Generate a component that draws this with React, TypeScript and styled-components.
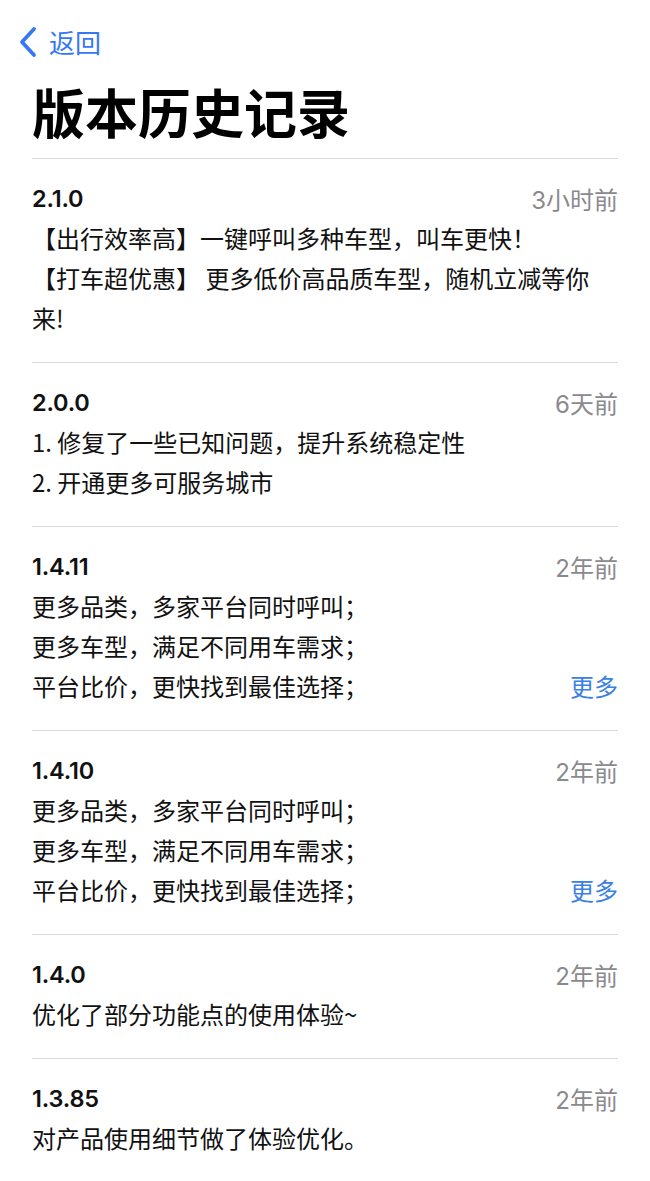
import React from "react";
import styled, { createGlobalStyle } from "styled-components";

const Global = createGlobalStyle`
  html, body { margin: 0; padding: 0; background: #ffffff; }
  body { font-family: "Inter", "Noto Sans CJK SC", sans-serif; color: #111111; }
`;

const Page = styled.div`
  width: 650px;
  display: flex;
  flex-direction: column;
`;

const NavBar = styled.div`
  display: flex;
  align-items: center;
  gap: 10px;
  padding: 27px 0 0 17px;
  height: 30px;
  color: #3478f6;
`;

const BackLabel = styled.span`
  font-family: "Noto Sans CJK SC", sans-serif;
  font-size: 26px;
  line-height: 30px;
  color: #3478f6;
`;

const Title = styled.h1`
  margin: 22px 0 15px 32px;
  font-family: "Noto Sans CJK SC", sans-serif;
  font-size: 53px;
  line-height: 64px;
  font-weight: 700;
  color: #000000;
`;

const List = styled.div`
  margin: 0 32px;
  display: flex;
  flex-direction: column;
`;

const Entry = styled.section`
  border-top: 1px solid #dcdcdc;
  padding: 19px 0 24px;
`;

const HeadRow = styled.div`
  display: flex;
  justify-content: space-between;
  align-items: center;
  height: 40px;
`;

const Version = styled.span`
  font-family: "Inter", "Noto Sans CJK SC", sans-serif;
  font-size: 23.5px;
  font-weight: 600;
  letter-spacing: -0.2px;
  color: #111111;
`;

const Time = styled.span`
  font-family: "Inter", "Noto Sans CJK SC", sans-serif;
  font-size: 24px;
  color: #8a8a8e;
`;

const Line = styled.div`
  display: flex;
  justify-content: space-between;
  align-items: center;
  font-family: "Noto Sans CJK SC", sans-serif;
  font-size: 24px;
  line-height: 40px;
  color: #111111;
`;

const More = styled.span`
  font-family: "Noto Sans CJK SC", sans-serif;
  font-size: 24px;
  color: #3b80e3;
`;

const TextBlock = styled.span`
  flex: 1;
`;

type Item = { v: string; t: string; lines: string[]; more?: boolean };

const items: Item[] = [
  {
    v: "2.1.0",
    t: "3小时前",
    lines: ["【出行效率高】一键呼叫多种车型，叫车更快！", "【打车超优惠】 更多低价高品质车型，随机立减等你来!"],
  },
  { v: "2.0.0", t: "6天前", lines: ["1. 修复了一些已知问题，提升系统稳定性", "2. 开通更多可服务城市"] },
  {
    v: "1.4.11",
    t: "2年前",
    lines: ["更多品类，多家平台同时呼叫；", "更多车型，满足不同用车需求；", "平台比价，更快找到最佳选择；"],
    more: true,
  },
  {
    v: "1.4.10",
    t: "2年前",
    lines: ["更多品类，多家平台同时呼叫；", "更多车型，满足不同用车需求；", "平台比价，更快找到最佳选择；"],
    more: true,
  },
  { v: "1.4.0", t: "2年前", lines: ["优化了部分功能点的使用体验~"] },
  { v: "1.3.85", t: "2年前", lines: ["对产品使用细节做了体验优化。"] },
];

const Chevron = () => (
  <svg width="22" height="32" viewBox="0 0 22 32" fill="none">
    <path d="M17 3 L5 16 L17 29" stroke="#3478f6" strokeWidth="3.8" strokeLinecap="round" strokeLinejoin="round" />
  </svg>
);

export default function App() {
  return (
    <Page>
      <Global />
      <NavBar>
        <Chevron />
        <BackLabel>返回</BackLabel>
      </NavBar>
      <Title>版本历史记录</Title>
      <List>
        {items.map((it) => (
          <Entry key={it.v}>
            <HeadRow>
              <Version>{it.v}</Version>
              <Time>{it.t}</Time>
            </HeadRow>
            {it.lines.map((l, i) => (
              <Line key={i}>
                <TextBlock>{l}</TextBlock>
                {it.more && i === it.lines.length - 1 && <More>更多</More>}
              </Line>
            ))}
          </Entry>
        ))}
      </List>
    </Page>
  );
}
